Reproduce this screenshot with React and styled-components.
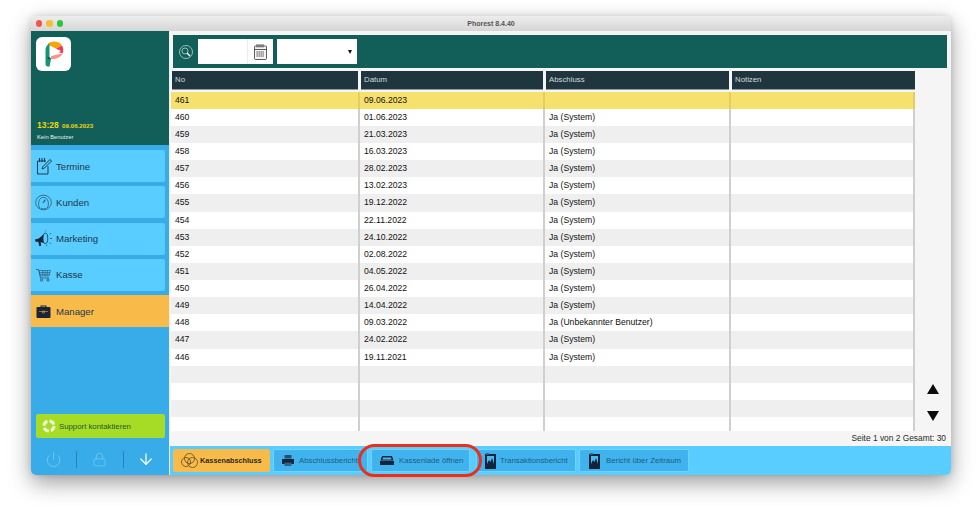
import React from "react";
import styled, { createGlobalStyle } from "styled-components";
import { Power, Lock, ArrowDown } from "lucide-react";

const GlobalStyle = createGlobalStyle`
  html, body {
    margin: 0;
    background: #fff;
    font-family: "Liberation Sans", Arial, sans-serif;
  }
  * { box-sizing: border-box; }
`;

const rows = [
  ["461", "09.06.2023", ""],
  ["460", "01.06.2023", "Ja (System)"],
  ["459", "21.03.2023", "Ja (System)"],
  ["458", "16.03.2023", "Ja (System)"],
  ["457", "28.02.2023", "Ja (System)"],
  ["456", "13.02.2023", "Ja (System)"],
  ["455", "19.12.2022", "Ja (System)"],
  ["454", "22.11.2022", "Ja (System)"],
  ["453", "24.10.2022", "Ja (System)"],
  ["452", "02.08.2022", "Ja (System)"],
  ["451", "04.05.2022", "Ja (System)"],
  ["450", "26.04.2022", "Ja (System)"],
  ["449", "14.04.2022", "Ja (System)"],
  ["448", "09.03.2022", "Ja (Unbekannter Benutzer)"],
  ["447", "24.02.2022", "Ja (System)"],
  ["446", "19.11.2021", "Ja (System)"],
  ["", "", ""],
  ["", "", ""],
  ["", "", ""],
  ["", "", ""],
];

const Page = styled.div`
  width: 977px;
  height: 514px;
  padding: 16px 26px 39px 31px;
  overflow: hidden;
`;

const Window = styled.div`
  height: 459px;
  display: flex;
  flex-direction: column;
  border-radius: 5px;
  background: #f5f5f5;
  box-shadow: 0 8px 22px rgba(0, 0, 0, 0.38), 0 0 6px rgba(0, 0, 0, 0.12);
`;

const TitleBar = styled.div`
  height: 15px;
  flex: none;
  display: flex;
  align-items: center;
  gap: 4px;
  padding-left: 4.5px;
  position: relative;
  border-radius: 5px 5px 0 0;
  background: linear-gradient(#ececec, #d6d6d6);
`;

const Light = styled.span`
  width: 6.5px;
  height: 6.5px;
  border-radius: 50%;
  background: ${(p) => p.$color};
`;

const WindowTitle = styled.div`
  position: absolute;
  inset: 0;
  text-align: center;
  font-size: 7px;
  font-weight: 700;
  line-height: 16px;
  color: #555;
`;

const Body = styled.div`
  flex: 1;
  min-height: 0;
  display: flex;
`;

const Sidebar = styled.aside`
  width: 138px;
  flex: none;
  display: flex;
  flex-direction: column;
  background: #38ace8;
  border-radius: 0 0 0 5px;
`;

const Brand = styled.div`
  height: 114px;
  flex: none;
  padding: 6px 5px 4px;
  display: flex;
  flex-direction: column;
  background: #125f5a;
`;

const LogoBox = styled.div`
  width: 35px;
  height: 34px;
  border-radius: 6px;
  background: #fff;
  display: flex;
  align-items: center;
  justify-content: center;
`;

const Clock = styled.div`
  margin-top: auto;
  color: #ecd60f;
  font-size: 8.5px;
  font-weight: 700;
  line-height: 11px;
  padding-left: 1px;

  small {
    font-size: 6.2px;
    margin-left: 1px;
  }
`;

const UserName = styled.div`
  margin-top: 2px;
  padding-left: 1px;
  color: #e8f2f0;
  font-size: 5.8px;
  line-height: 8px;
`;

const NavList = styled.nav`
  margin-top: 5px;
  display: flex;
  flex-direction: column;
  gap: 4.3px;
`;

const NavItem = styled.div`
  height: 32px;
  display: flex;
  align-items: center;
  gap: 4px;
  padding-left: 4px;
  font-size: 9.6px;
  line-height: 31px;
  color: #1b384b;
  background: ${(p) => (p.$active ? "#f8bb49" : "#59cdff")};
  width: ${(p) => (p.$active ? "138px" : "134px")};
  border-radius: ${(p) => (p.$active ? "0" : "0 2px 2px 0")};
`;

const NavIcon = styled.span`
  width: 17px;
  height: 20px;
  flex: none;
  display: flex;
  align-items: center;
  justify-content: center;
`;

const SupportButton = styled.div`
  margin: auto 4px 0 5px;
  height: 24px;
  display: flex;
  align-items: center;
  gap: 3px;
  padding-left: 6px;
  border-radius: 2px;
  background: #a6dc26;
  color: #235733;
  font-size: 7.8px;
`;

const PowerRow = styled.div`
  height: 37px;
  flex: none;
  padding-top: 5px;
  display: flex;
  align-items: center;
`;

const PowerCell = styled.div`
  flex: 1;
  display: flex;
  justify-content: center;
  height: 17px;
  align-items: center;
  border-left: ${(p) => (p.$line ? "1px solid #2583b9" : "none")};
  color: ${(p) => (p.$bright ? "#fff" : "#7fd0f5")};
`;

const Main = styled.main`
  flex: 1;
  min-width: 0;
  display: flex;
  flex-direction: column;
  border-left: 1px solid #eee;
`;

const Toolbar = styled.div`
  height: 33px;
  flex: none;
  margin: 4px 4px 0 3px;
  display: flex;
  align-items: center;
  padding-left: 5.5px;
  background: #125f5a;
`;

const SearchIcon = styled.span`
  width: 14px;
  height: 14px;
  margin-right: 5.5px;
  display: flex;
  align-items: center;
  justify-content: center;
`;

const DateField = styled.div`
  width: 75px;
  height: 25px;
  margin-right: 4px;
  display: flex;
  justify-content: flex-end;
  background: #fff;
`;

const DateButton = styled.span`
  width: 26px;
  display: flex;
  align-items: center;
  justify-content: center;
  border-left: 1px solid #ececec;
`;

const SelectField = styled.div`
  width: 80px;
  height: 25px;
  display: flex;
  align-items: center;
  justify-content: flex-end;
  padding-right: 5px;
  background: #fff;

  &::after {
    content: "";
    border-left: 2.5px solid transparent;
    border-right: 2.5px solid transparent;
    border-top: 4.5px solid #111;
  }
`;

const TableArea = styled.div`
  flex: 1;
  min-height: 0;
  display: flex;
  margin-top: 2.5px;
`;

const Table = styled.div`
  width: 744px;
  margin-left: 1px;
  flex: none;
  overflow: hidden;
`;

const columns = "189px 185px 186px 184px";

const HeadRow = styled.div`
  height: 18px;
  display: grid;
  grid-template-columns: ${columns};
  margin-bottom: 3.2px;
`;

const HeadCell = styled.div`
  background: #1f363f;
  color: #d3dcde;
  font-size: 7.8px;
  line-height: 18px;
  padding-left: 3px;
  margin-left: 1px;
  margin-right: 2px;
  border-bottom: 1px solid #8d9a9e;
  &:last-child {
    margin-right: 0;
  }
`;

const DataRow = styled.div`
  height: 17.14px;
  display: grid;
  grid-template-columns: ${columns};
  background: ${(p) => p.$bg};
`;

const DataCell = styled.div`
  font-size: 8.65px;
  line-height: 17px;
  color: #111;
  padding-left: 4px;
  border-right: 2px solid ${(p) => (p.$first ? "rgba(0, 0, 0, 0.08)" : "#cfcfcf")};
`;

const ScrollColumn = styled.div`
  flex: 1;
  display: flex;
  flex-direction: column;
  align-items: center;
  gap: 17px;
  justify-content: flex-end;
  padding-bottom: 10px;
  padding-right: 1px;
`;

const Triangle = styled.span`
  width: 0;
  height: 0;
  border-left: 6px solid transparent;
  border-right: 6px solid transparent;
  ${(p) => (p.$up ? "border-bottom" : "border-top")}: 10px solid #0c0c0c;
`;

const PageInfo = styled.div`
  height: 15px;
  flex: none;
  padding-right: 5px;
  text-align: right;
  font-size: 8.4px;
  line-height: 14px;
  color: #2a2a2a;
`;

const ButtonBar = styled.div`
  height: 29px;
  flex: none;
  position: relative;
  display: flex;
  align-items: center;
  padding: 0 0 0 3px;
  border-radius: 0 0 5px 0;
  background: #59cdff;
`;

const BarButton = styled.div`
  height: 23px;
  width: ${(p) => p.$w}px;
  margin-right: ${(p) => p.$gap ?? 3}px;
  flex: none;
  display: flex;
  align-items: center;
  gap: ${(p) => p.$space ?? 5}px;
  padding-left: ${(p) => p.$pad || 8}px;
  overflow: hidden;
  white-space: nowrap;
  border-radius: 2px;
  font-size: ${(p) => (p.$active ? 7.3 : 7.8)}px;
  background: ${(p) => (p.$active ? "#f8bb49" : "#40b3ee")};
  border: 1px solid ${(p) => (p.$active ? "#f8bb49" : "#6ed3ff")};
  color: ${(p) => (p.$active ? "#2b2a20" : "#1d5c82")};
  font-weight: ${(p) => (p.$active ? 700 : 400)};
`;

const Highlight = styled.div`
  position: absolute;
  left: 188px;
  top: -2px;
  width: 124px;
  height: 33px;
  border: 3.5px solid #e8301c;
  border-radius: 17px;
  pointer-events: none;
`;

const Logo = () => (
  <svg width="20" height="26" viewBox="0 0 20 26">
    <path d="M4 2.500C8 -.5 15 -.5 18 4.500L9 9z" fill="#f7a30c" />
    <path d="M9 9l9-4.500C19.500 7 19.700 10 18.500 12.500z" fill="#e8405c" />
    <path d="M7 15l11.500-2.500C16.500 17 11 18.500 7 18z" fill="#fb8f8a" />
    <path d="M5.500 4.500L17 10 5.500 16z" fill="#fff" />
    <path d="M5.500 4.500v11.500L7 18l-1.500 7.500C3.500 26 1.500 25 1.500 23V9c0-2.500 1-5 4-6.500z" fill="#12976f" />
    <path d="M5.500 16L7 18c-1.500 1-3.500 0-4-2z" fill="#0d5f55" />
  </svg>
);

const NotesIcon = () => (
  <svg width="16" height="18" viewBox="0 0 16 18" fill="none" stroke="#1b3c54" strokeWidth="1">
    <path d="M10 4H1.500v13h10.500V9" />
    <path d="M3.500 1v4M6 1v4M8.500 1v4" strokeWidth="1.100" />
    <path d="M14 2.500l1.500 1.500L8.500 11l-2.500 1 1-2.500z" />
  </svg>
);

const GaugeIcon = () => (
  <svg width="18" height="17" viewBox="0 0 18 17" fill="none" stroke="#2b6280" strokeWidth="0.9">
    <ellipse cx="9" cy="8.500" rx="8.300" ry="7.800" />
    <path d="M5 14.500C2.500 10 4 3 9 3s6.500 7 4 11.500" />
    <path d="M8.500 9l2.500-3.500" strokeWidth="1.300" />
    <path d="M6 14.500c2 1 4 1 6 0" />
  </svg>
);

const MegaphoneIcon = () => (
  <svg width="18" height="18" viewBox="0 0 18 18">
    <path d="M0 9.500L4 8.500 10.500 3l1 10.500L6 12.500l.5 4H4.500L3.500 12 .5 12z" fill="#16263c" />
    <ellipse cx="11" cy="8.300" rx="2.500" ry="5.500" fill="#59cdff" stroke="#16263c" strokeWidth="0.8" />
    <path d="M11 1l.5-1M15.500 4l1.300-1M16 8.500h2M15.500 13l1.300 1M12 15l.5 1.500" stroke="#16263c" strokeWidth="0.7" fill="none" />
  </svg>
);

const CartIcon = () => (
  <svg width="15" height="14" viewBox="0 0 15 14" fill="none" stroke="#2b6280" strokeWidth="0.9">
    <path d="M0 1.500h2.500l2 8.500h8.500" />
    <path d="M3 2.500h11.500L13 8H4.300zM3.500 4.500h10.500M4 6.300h9.500M6.500 2.500l.5 5.500M9 2.500V8M11.500 2.500L11 8" strokeWidth="0.7" />
    <circle cx="5.500" cy="12" r="1.200" />
    <circle cx="12" cy="12" r="1.200" />
  </svg>
);

const BriefcaseIcon = () => (
  <svg width="15" height="14" viewBox="0 0 15 14">
    <path d="M4.500 4V1.500h6V4h-1V2.500h-4V4z" fill="#1a2338" />
    <rect x="0.500" y="3" width="14" height="11" rx="1" fill="#1a2338" />
    <path d="M3 7.500h9M6.500 7l2 0v2h-2z" stroke="#d3a53e" strokeWidth="0.6" fill="none" />
  </svg>
);

const LifeBuoyIcon = () => (
  <svg width="14" height="14" viewBox="0 0 14 14" fill="none">
    <circle cx="7" cy="7" r="5" stroke="#eef9d4" strokeWidth="3" strokeDasharray="5.800 2" />
  </svg>
);

const SearchGlyph = () => (
  <svg width="14" height="14" viewBox="0 0 14 14" fill="none" stroke="#b9d6d3" strokeWidth="0.8">
    <circle cx="7" cy="7" r="6.500" />
    <circle cx="6" cy="6" r="3" />
    <path d="M8 8l3 3" stroke="#fff" strokeWidth="1.400" />
  </svg>
);

const CalendarIcon = () => (
  <svg width="13" height="16" viewBox="0 0 13 16" fill="none" stroke="#333" strokeWidth="0.8">
    <rect x="0.500" y="2" width="12" height="13.500" rx="1" fill="#f4f4f4" />
    <path d="M.5 5.500h12M3 0v3.500M5 0v3.500M7 0v3.500M9 0v3.500" />
    <path d="M2.500 8h8M2.500 10h8M2.500 12h8" strokeWidth="1.200" strokeDasharray="1.300 .7" />
  </svg>
);

const CoinsIcon = () => (
  <svg width="17" height="15" viewBox="0 0 17 15" fill="none" stroke="#5a4a28" strokeWidth="0.8">
    <circle cx="5" cy="9" r="4.500" />
    <circle cx="8.500" cy="5.500" r="5" />
    <circle cx="11.500" cy="9.500" r="5" />
  </svg>
);

const PrinterIcon = () => (
  <svg width="12" height="11" viewBox="0 0 12 11">
    <path d="M2.500 0h7v3.500h-7z" fill="#23506e" />
    <path d="M0 4h12v5H0z" fill="#12243a" />
    <path d="M2.500 7.500h7V11h-7z" fill="#2e6586" />
  </svg>
);

const DrawerIcon = () => (
  <svg width="14" height="9" viewBox="0 0 14 9">
    <path d="M2 0h10l1.500 4.500H.5z" fill="#12243a" />
    <path d="M3 1.500h8l.5 2h-9z" fill="#4db9ee" />
    <path d="M0 5h14v4H0z" fill="#12243a" />
  </svg>
);

const ReportIcon = () => (
  <svg width="13" height="16" viewBox="0 0 13 16">
    <path d="M1 1h11v15H1z" fill="#12243a" />
    <path d="M3 3h7v8H3z" fill="#4db9ee" />
    <path d="M3 11l2-4 1.500 2L8 5l2 6z" fill="#12243a" />
    <path d="M2 0h3v2H2z" fill="#35617c" />
  </svg>
);

const navItems = [
  ["Termine", <NotesIcon key="t" />],
  ["Kunden", <GaugeIcon key="k" />],
  ["Marketing", <MegaphoneIcon key="m" />],
  ["Kasse", <CartIcon key="c" />],
  ["Manager", <BriefcaseIcon key="b" />],
];

export default function App() {
  return (
    <Page>
      <GlobalStyle />
      <Window>
        <TitleBar>
          <WindowTitle>Phorest 8.4.40</WindowTitle>
          <Light $color="#f4564e" />
          <Light $color="#f8bc2e" />
          <Light $color="#28c73f" />
        </TitleBar>
        <Body>
          <Sidebar>
            <Brand>
              <LogoBox>
                <Logo />
              </LogoBox>
              <Clock>
                13:28 <small>09.06.2023</small>
              </Clock>
              <UserName>Kein Benutzer</UserName>
            </Brand>
            <NavList>
              {navItems.map(([label, icon]) => (
                <NavItem key={label} $active={label === "Manager"}>
                  <NavIcon>{icon}</NavIcon>
                  {label}
                </NavItem>
              ))}
            </NavList>
            <SupportButton>
              <LifeBuoyIcon />
              Support kontaktieren
            </SupportButton>
            <PowerRow>
              <PowerCell>
                <Power size={17} strokeWidth={1} />
              </PowerCell>
              <PowerCell $line>
                <Lock size={15} strokeWidth={1} />
              </PowerCell>
              <PowerCell $line $bright>
                <ArrowDown size={18} strokeWidth={1.6} />
              </PowerCell>
            </PowerRow>
          </Sidebar>
          <Main>
            <Toolbar>
              <SearchIcon>
                <SearchGlyph />
              </SearchIcon>
              <DateField>
                <DateButton>
                  <CalendarIcon />
                </DateButton>
              </DateField>
              <SelectField />
            </Toolbar>
            <TableArea>
              <Table>
                <HeadRow>
                  <HeadCell>No</HeadCell>
                  <HeadCell>Datum</HeadCell>
                  <HeadCell>Abschluss</HeadCell>
                  <HeadCell>Notizen</HeadCell>
                </HeadRow>
                {rows.map((row, i) => (
                  <DataRow
                    key={i}
                    $bg={i === 0 ? "#f6e06e" : i % 2 ? "#fff" : "#efefef"}
                  >
                    <DataCell $first={i === 0}>{row[0]}</DataCell>
                    <DataCell $first={i === 0}>{row[1]}</DataCell>
                    <DataCell $first={i === 0}>{row[2]}</DataCell>
                    <DataCell $first={i === 0} />
                  </DataRow>
                ))}
              </Table>
              <ScrollColumn>
                <Triangle $up />
                <Triangle />
              </ScrollColumn>
            </TableArea>
            <PageInfo>Seite 1 von 2 Gesamt: 30</PageInfo>
            <ButtonBar>
              <BarButton $active $w={97} $pad={7} $space={2}>
                <CoinsIcon />
                Kassenabschluss
              </BarButton>
              <BarButton $w={95}>
                <PrinterIcon />
                Abschlussbericht
              </BarButton>
              <BarButton $w={99} $gap={6}>
                <DrawerIcon />
                Kassenlade öffnen
              </BarButton>
              <BarButton $w={100} $pad={7} $space={3}>
                <ReportIcon />
                Transaktionsbericht
              </BarButton>
              <BarButton $w={110}>
                <ReportIcon />
                Bericht über Zeitraum
              </BarButton>
              <Highlight />
            </ButtonBar>
          </Main>
        </Body>
      </Window>
    </Page>
  );
}
